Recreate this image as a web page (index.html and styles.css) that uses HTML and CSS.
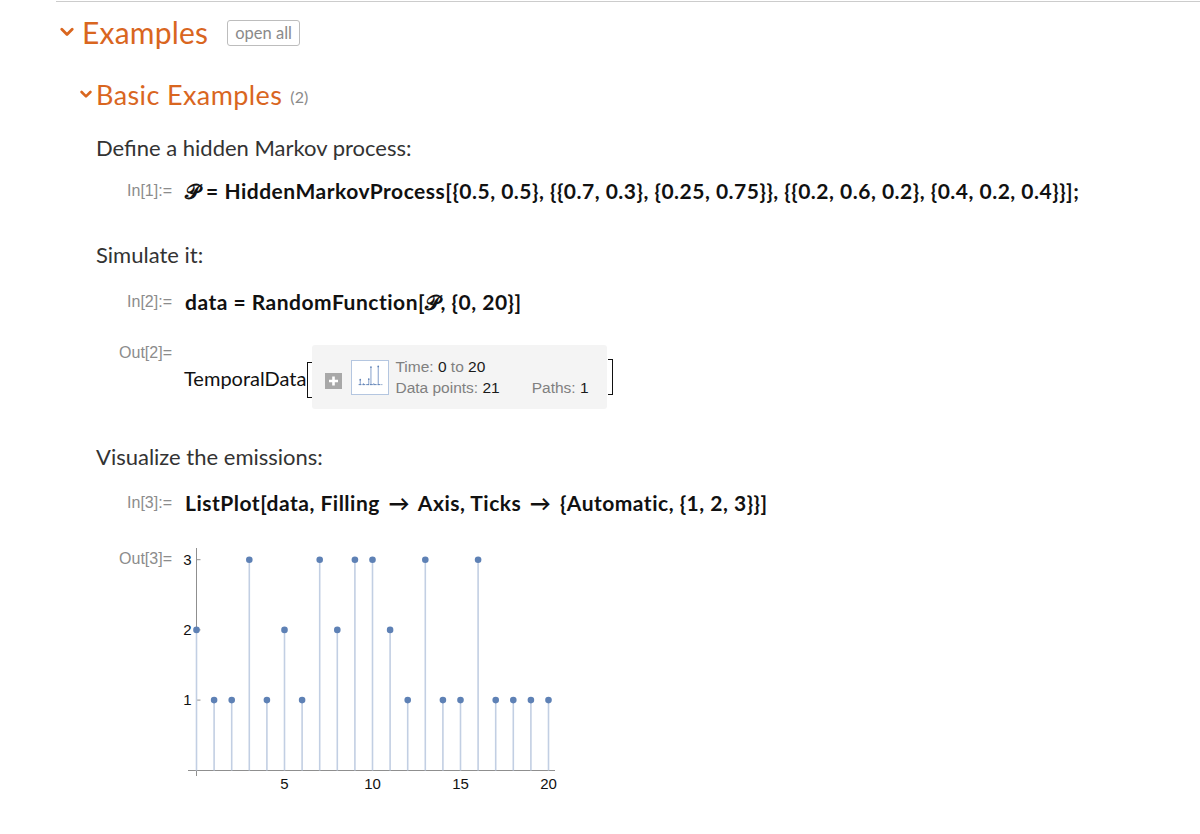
FILE: index.html
```html
<!DOCTYPE html>
<html>
<head>
<meta charset="utf-8">
<title>Examples</title>
<link rel="stylesheet" href="styles.css">
</head>
<body>
<div class="page">
  <div class="topline"></div>

  <div class="sec-head">
    <svg class="chev chev-lg" viewBox="0 0 14 10"><path d="M1.8 2.2 L7 7.4 L12.2 2.2"/></svg>
    <span class="sec-title">Examples</span>
    <span class="open-all">open all</span>
  </div>

  <div class="sub-head">
    <svg class="chev chev-sm" viewBox="0 0 12 9"><path d="M1.6 2 L6 6.4 L10.4 2"/></svg>
    <span class="sub-title">Basic Examples</span>
    <span class="count">(2)</span>
  </div>

  <p class="text t-define">Define a hidden Markov process:</p>
  <div class="cell in-1">
    <span class="label">In[1]:=</span>
    <span class="code">𝒫 = HiddenMarkovProcess[{0.5, 0.5}, {{0.7, 0.3}, {0.25, 0.75}}, {{0.2, 0.6, 0.2}, {0.4, 0.2, 0.4}}];</span>
  </div>

  <p class="text t-sim">Simulate it:</p>
  <div class="cell in-2">
    <span class="label">In[2]:=</span>
    <span class="code">data = RandomFunction[𝒫, {0, 20}]</span>
  </div>

  <div class="cell out-2">
    <span class="label">Out[2]=</span>
    <div class="out-body">
      <span class="td-head">TemporalData</span>
      <span class="bracket bracket-l"></span>
      <div class="summary">
        <span class="plus-btn">
          <svg viewBox="0 0 17 16"><path d="M8.5 3.5 V12.5 M4 8 H13"/></svg>
        </span>
        <span class="mini">
          <svg viewBox="0 0 38 34">
            <g class="mini-stem">
              <line x1="8.7" y1="19.3" x2="8.7" y2="25"/>
              <line x1="17.7" y1="18.7" x2="17.7" y2="25"/>
              <line x1="20" y1="6" x2="20" y2="25"/>
              <line x1="27.7" y1="5.3" x2="27.7" y2="25"/>
              <line x1="12" y1="23" x2="12" y2="25"/>
              <line x1="23" y1="23" x2="23" y2="25"/>
            </g>
            <line class="mini-base" x1="7" y1="24.5" x2="32" y2="24.5"/>
            <g class="mini-dot">
              <circle cx="8.7" cy="19.3" r="0.9"/>
              <circle cx="17.7" cy="18.7" r="0.9"/>
              <circle cx="20" cy="6" r="0.9"/>
              <circle cx="27.7" cy="5.3" r="0.9"/>
            </g>
          </svg>
        </span>
        <div class="sum-text">
          <div class="sum-line"><span class="k">Time: </span><span class="v">0</span><span class="k"> to </span><span class="v">20</span></div>
          <div class="sum-line"><span class="k">Data points: </span><span class="v">21</span><span class="k paths">Paths: </span><span class="v">1</span></div>
        </div>
      </div>
      <span class="bracket bracket-r"></span>
    </div>
  </div>

  <p class="text t-vis">Visualize the emissions:</p>
  <div class="cell in-3">
    <span class="label">In[3]:=</span>
    <span class="code">ListPlot[data, Filling <span class="arrow">→</span> Axis, Ticks <span class="arrow">→</span> {Automatic, {1, 2, 3}}]</span>
  </div>

  <div class="cell out-3">
    <span class="label">Out[3]=</span>
    <svg class="plot" width="400" height="260" viewBox="0 0 400 260">
      <g class="axes">
        <line x1="24.5" y1="6" x2="24.5" y2="234"/>
        <line x1="16" y1="228.5" x2="383" y2="228.5"/>
        <line x1="24.5" y1="17.7" x2="28.5" y2="17.7"/>
        <line x1="24.5" y1="87.9" x2="28.5" y2="87.9"/>
        <line x1="24.5" y1="158.1" x2="28.5" y2="158.1"/>
      </g>
      <g class="ticklabels">
        <text x="19.5" y="23" text-anchor="end">3</text>
        <text x="19.5" y="93.2" text-anchor="end">2</text>
        <text x="19.5" y="163.4" text-anchor="end">1</text>
        <text x="112.5" y="247" text-anchor="middle">5</text>
        <text x="200.5" y="247" text-anchor="middle">10</text>
        <text x="288.5" y="247" text-anchor="middle">15</text>
        <text x="376.5" y="247" text-anchor="middle">20</text>
      </g>
      <g class="stems">
        <line x1="24.5" y1="87.9" x2="24.5" y2="228.5"/>
        <line x1="42.1" y1="158.1" x2="42.1" y2="228.5"/>
        <line x1="59.7" y1="158.1" x2="59.7" y2="228.5"/>
        <line x1="77.3" y1="17.7" x2="77.3" y2="228.5"/>
        <line x1="94.9" y1="158.1" x2="94.9" y2="228.5"/>
        <line x1="112.5" y1="87.9" x2="112.5" y2="228.5"/>
        <line x1="130.1" y1="158.1" x2="130.1" y2="228.5"/>
        <line x1="147.7" y1="17.7" x2="147.7" y2="228.5"/>
        <line x1="165.3" y1="87.9" x2="165.3" y2="228.5"/>
        <line x1="182.9" y1="17.7" x2="182.9" y2="228.5"/>
        <line x1="200.5" y1="17.7" x2="200.5" y2="228.5"/>
        <line x1="218.1" y1="87.9" x2="218.1" y2="228.5"/>
        <line x1="235.7" y1="158.1" x2="235.7" y2="228.5"/>
        <line x1="253.3" y1="17.7" x2="253.3" y2="228.5"/>
        <line x1="270.9" y1="158.1" x2="270.9" y2="228.5"/>
        <line x1="288.5" y1="158.1" x2="288.5" y2="228.5"/>
        <line x1="306.1" y1="17.7" x2="306.1" y2="228.5"/>
        <line x1="323.7" y1="158.1" x2="323.7" y2="228.5"/>
        <line x1="341.3" y1="158.1" x2="341.3" y2="228.5"/>
        <line x1="358.9" y1="158.1" x2="358.9" y2="228.5"/>
        <line x1="376.5" y1="158.1" x2="376.5" y2="228.5"/>
      </g>
      <g class="dots">
        <circle cx="24.5" cy="87.9" r="3.3"/>
        <circle cx="42.1" cy="158.1" r="3.3"/>
        <circle cx="59.7" cy="158.1" r="3.3"/>
        <circle cx="77.3" cy="17.7" r="3.3"/>
        <circle cx="94.9" cy="158.1" r="3.3"/>
        <circle cx="112.5" cy="87.9" r="3.3"/>
        <circle cx="130.1" cy="158.1" r="3.3"/>
        <circle cx="147.7" cy="17.7" r="3.3"/>
        <circle cx="165.3" cy="87.9" r="3.3"/>
        <circle cx="182.9" cy="17.7" r="3.3"/>
        <circle cx="200.5" cy="17.7" r="3.3"/>
        <circle cx="218.1" cy="87.9" r="3.3"/>
        <circle cx="235.7" cy="158.1" r="3.3"/>
        <circle cx="253.3" cy="17.7" r="3.3"/>
        <circle cx="270.9" cy="158.1" r="3.3"/>
        <circle cx="288.5" cy="158.1" r="3.3"/>
        <circle cx="306.1" cy="17.7" r="3.3"/>
        <circle cx="323.7" cy="158.1" r="3.3"/>
        <circle cx="341.3" cy="158.1" r="3.3"/>
        <circle cx="358.9" cy="158.1" r="3.3"/>
        <circle cx="376.5" cy="158.1" r="3.3"/>
      </g>
    </svg>
  </div>
</div>
</body>
</html>
```

FILE: styles.css
```css
html, body {
  margin: 0;
  padding: 0;
  background: #ffffff;
}

.page {
  width: 1200px;
  height: 834px;
  overflow: hidden;
  font-family: "Lato", "Noto Sans", sans-serif;
  color: #333333;
}

.topline {
  margin: 1px 0 0 56px;
  border-top: 1px solid #cccccc;
}

/* section header */
.sec-head {
  display: flex;
  align-items: center;
  height: 40px;
  margin-top: 10px;
  padding-left: 60px;
}

.chev {
  fill: none;
  stroke: #d9661f;
  stroke-linecap: round;
  stroke-linejoin: round;
}

.chev-lg {
  width: 14px;
  height: 10px;
  stroke-width: 2.8;
  margin-right: 8px;
}

.sec-title {
  font-size: 30px;
  color: #d9661f;
  letter-spacing: 0.2px;
}

.open-all {
  margin-left: 19px;
  height: 26px;
  line-height: 24px;
  padding: 0 7px;
  border: 1px solid #bdbdbd;
  border-radius: 3px;
  font-size: 16.5px;
  color: #8a8a8a;
  box-sizing: border-box;
  margin-top: 2px;
}

.sub-head {
  display: flex;
  align-items: center;
  height: 36px;
  margin-top: 24px;
  padding-left: 80px;
}

.chev-sm {
  width: 12px;
  height: 9px;
  stroke-width: 2.6;
  margin-right: 4px;
}

.sub-title {
  font-size: 27px;
  letter-spacing: 0.4px;
  color: #d9661f;
}

.count {
  margin-left: 8px;
  font-size: 16px;
  color: #8a8a8a;
  padding-top: 4px;
}

/* paragraphs */
.text {
  margin: 0;
  padding-left: 96px;
  font-size: 22px;
  line-height: 30px;
  color: #333333;
}

.t-define { margin-top: 21px; }
.t-sim { margin-top: 35px; }
.t-vis { margin-top: 33px; }

/* cells */
.cell {
  display: flex;
  align-items: center;
}

.label {
  flex: none;
  width: 172px;
  text-align: right;
  font-family: "Liberation Sans", Arial, sans-serif;
  font-size: 16px;
  color: #8c8c8c;
}

.code {
  margin-left: 13px;
  font-size: 21px;
  letter-spacing: 0.5px;
  line-height: 28px;
  font-weight: 700;
  color: #111111;
  white-space: nowrap;
}

.arrow {
  margin: 0 3px;
}

.in-1 { margin-top: 14px; }
.in-2 { margin-top: 18px; }
.in-3 { margin-top: 17px; }

.out-2 {
  margin-top: 29px;
  align-items: flex-start;
  height: 64px;
}

.out-2 .label {
  line-height: 16px;
}

.out-body {
  display: flex;
  align-items: center;
  height: 64px;
  margin-left: 12px;
}

.td-head {
  font-size: 20px;
  color: #111111;
  padding-top: 2px;
}

.bracket {
  display: block;
  flex: none;
  width: 5px;
  height: 36px;
  border: 1.5px solid #111111;
  box-sizing: border-box;
}

.bracket-l {
  border-right: none;
  margin-left: 1px;
  margin-top: 6px;
}

.bracket-r {
  border-left: none;
  margin-left: 1px;
  margin-top: 0;
}

.summary {
  display: flex;
  align-items: center;
  flex: none;
  width: 295px;
  height: 64px;
  box-sizing: border-box;
  padding-left: 13px;
  background: #f4f4f4;
  border-radius: 3px;
  font-family: "Liberation Sans", Arial, sans-serif;
}

.plus-btn {
  display: block;
  width: 17px;
  height: 16px;
  background: #a8a8a8;
  margin-top: 8px;
}

.plus-btn svg {
  display: block;
  width: 17px;
  height: 16px;
  fill: none;
  stroke: #ffffff;
  stroke-width: 2.6;
}

.mini {
  display: block;
  width: 38px;
  height: 35px;
  margin-left: 9px;
  background: #ffffff;
  border: 1px solid #b4c6e0;
  box-sizing: border-box;
}

.mini svg {
  display: block;
  width: 36px;
  height: 33px;
}

.mini-stem line {
  stroke: #7f9bc8;
  stroke-width: 1;
}

.mini-base {
  stroke: #5e81b5;
  stroke-width: 1;
  stroke-dasharray: 3 1;
}

.mini-dot circle {
  fill: #5e81b5;
}

.sum-text {
  margin-left: 6px;
  font-size: 15.5px;
  line-height: 21px;
}

.k { color: #808080; }
.v { color: #1a1a1a; }
.paths { margin-left: 32px; }

.out-3 {
  margin-top: 25px;
  align-items: flex-start;
}

.out-3 .label {
  margin-top: 9px;
  line-height: 16px;
}

.plot {
  display: block;
  flex: none;
}

.axes line {
  stroke: #8f8f8f;
  stroke-width: 1;
}

.ticklabels text {
  font-family: "Liberation Sans", Arial, sans-serif;
  font-size: 15px;
  fill: #111111;
}

.stems line {
  stroke: #c2cfe3;
  stroke-width: 1.6;
}

.dots circle {
  fill: #5e81b5;
}
```
